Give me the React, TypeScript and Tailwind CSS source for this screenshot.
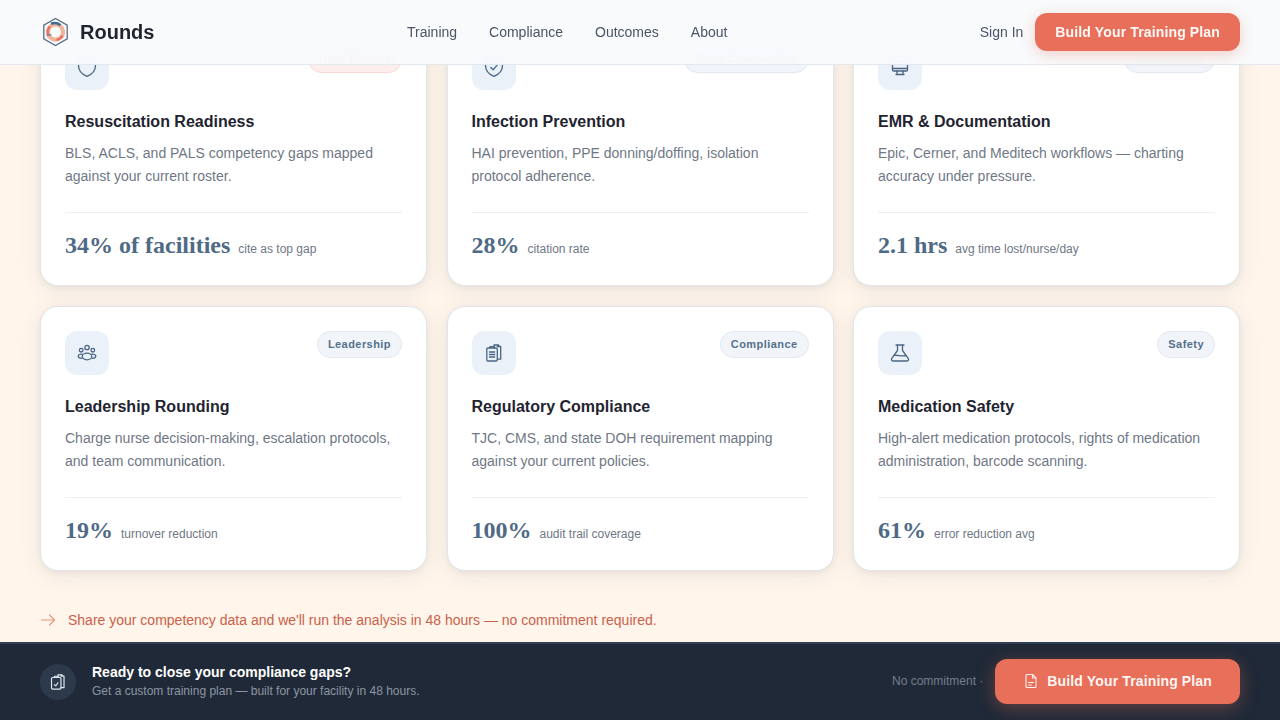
import type { ReactNode } from "react"

const slate = "#4a6583"

function LogoMark() {
  return (
    <svg width="30" height="30" viewBox="0 0 30 30" fill="none" className="shrink-0">
      <path d="M15.500 1.500 27.200 8.200v13.600L15.500 28.500 3.800 21.800V8.200Z" stroke="#56708a" strokeWidth="1.300" fill="#f8fafc" />
      <circle cx="15.500" cy="15" r="7.600" stroke="#f2b49c" strokeWidth="4.200" />
      <path d="M8.200 17.500A7.800 7.800 0 0 1 10 9.500M22.500 18.500a7.800 7.800 0 0 1-6 4.300" stroke="#e8705a" strokeWidth="2.200" />
      <path d="M11 6.800a9.500 9.500 0 0 1 9.500 1.400" stroke="#3f6b93" strokeWidth="2.600" />
      <path d="M6.800 18h4.500" stroke="#54657a" strokeWidth="1.100" />
    </svg>
  )
}

function IconBase({ children, size = 20, color = slate, width = 1.300 }: { children: ReactNode; size?: number; color?: string; width?: number }) {
  return (
    <svg width={size} height={size} viewBox="0 0 20 20" fill="none" stroke={color} strokeWidth={width} strokeLinecap="round" strokeLinejoin="round">
      {children}
    </svg>
  )
}

const shieldPath = "M10 18.300C5.200 16.400 1.500 13 1.500 7.500V3.500L10 1l8.500 2.500v4c0 5.500-3.700 8.900-8.500 10.800Z"

function ShieldIcon() {
  return (
    <IconBase>
      <path d={shieldPath} />
    </IconBase>
  )
}

function ShieldCheckIcon() {
  return (
    <IconBase>
      <path d={shieldPath} />
      <path d="m6.800 9.500 2.300 2.300 4.200-5" />
    </IconBase>
  )
}

function MonitorIcon() {
  return (
    <IconBase>
      <rect x="2.500" y="3" width="15" height="10" rx="1" />
      <path d="M2.500 10.500h15M7 13v3.500h6V13M6 16.500h8" />
    </IconBase>
  )
}

function TeamIcon() {
  return (
    <IconBase>
      <circle cx="10" cy="4.500" r="2.200" />
      <circle cx="4.200" cy="7.200" r="1.800" />
      <circle cx="15.800" cy="7.200" r="1.800" />
      <ellipse cx="10" cy="13.500" rx="4.800" ry="3.300" />
      <path d="M5.300 11.200C3 11.200 1.200 12.200 1.200 13.300s1.500 1.900 3.700 2M14.700 11.200c2.300 0 4.100 1 4.100 2.100s-1.500 1.900-3.700 2" />
    </IconBase>
  )
}

function ClipboardsIcon({ color = slate, check = false, size = 20 }: { color?: string; check?: boolean; size?: number }) {
  return (
    <IconBase color={color} size={size}>
      <rect x="2.800" y="5" width="10.500" height="13" rx="1.200" />
      <path d="M6 5V3.600h4.200V5" />
      <path d="M13.300 3.500h3.400v12.700h-3.400M10 3.500V2h4.600v1.500" />
      {check ? <path d="m6 13 1.500 1.300L10 10.800" /> : <path d="M5.500 9h5.200M5.500 11.500h5.200M5.500 14h5.200" />}
    </IconBase>
  )
}

function FlaskIcon() {
  return (
    <IconBase>
      <path d="M7.500 2v5.500L1.800 15.300C.9 16.600 1.800 18 3.300 18h13.400c1.500 0 2.400-1.400 1.500-2.700L12.500 7.500V2M6 2h8" />
      <path d="M4 12.500c3.500-1 7 1.200 12 0" />
    </IconBase>
  )
}

function PlanIcon() {
  return (
    <svg width="16" height="16" viewBox="0 0 16 16" fill="none" stroke="#fff" strokeWidth="1.100" strokeLinecap="round" strokeLinejoin="round" className="opacity-90">
      <path d="M3 2.500c0-.6.400-1 1-1h5.500L13 5v8.500c0 .6-.400 1-1 1H4c-.6 0-1-.4-1-1Z" />
      <path d="M9.500 1.500V5H13M5.500 9.500h5M5.500 12h3" />
    </svg>
  )
}

type Item = {
  icon: ReactNode
  tag: string
  tagClass: string
  title: string
  lines: string[]
  stat: string
  note: string
}

const neutralTag = "border-[#e2e8f0] bg-[#f1f5f9] text-[#56708c]"

const items: Item[] = [
  {
    icon: <ShieldIcon />,
    tag: "High Priority",
    tagClass: "border-[#fbd9d3] bg-[#fdeeeb] text-[#c8553d]",
    title: "Resuscitation Readiness",
    lines: ["BLS, ACLS, and PALS competency gaps mapped", "against your current roster."],
    stat: "34% of facilities",
    note: "cite as top gap",
  },
  {
    icon: <ShieldCheckIcon />,
    tag: "Joint Commission",
    tagClass: neutralTag,
    title: "Infection Prevention",
    lines: ["HAI prevention, PPE donning/doffing, isolation", "protocol adherence."],
    stat: "28%",
    note: "citation rate",
  },
  {
    icon: <MonitorIcon />,
    tag: "Productivity",
    tagClass: neutralTag,
    title: "EMR & Documentation",
    lines: ["Epic, Cerner, and Meditech workflows — charting", "accuracy under pressure."],
    stat: "2.1 hrs",
    note: "avg time lost/nurse/day",
  },
  {
    icon: <TeamIcon />,
    tag: "Leadership",
    tagClass: neutralTag,
    title: "Leadership Rounding",
    lines: ["Charge nurse decision-making, escalation protocols,", "and team communication."],
    stat: "19%",
    note: "turnover reduction",
  },
  {
    icon: <ClipboardsIcon />,
    tag: "Compliance",
    tagClass: neutralTag,
    title: "Regulatory Compliance",
    lines: ["TJC, CMS, and state DOH requirement mapping", "against your current policies."],
    stat: "100%",
    note: "audit trail coverage",
  },
  {
    icon: <FlaskIcon />,
    tag: "Safety",
    tagClass: neutralTag,
    title: "Medication Safety",
    lines: ["High-alert medication protocols, rights of medication", "administration, barcode scanning."],
    stat: "61%",
    note: "error reduction avg",
  },
]

function Card({ item }: { item: Item }) {
  return (
    <div className="flex h-[265px] flex-col rounded-[18px] border border-[#e2e5ea] bg-white px-6 pt-6 shadow-[0_2px_6px_rgba(30,42,58,0.06),0_4px_24px_rgba(30,42,58,0.07)]">
      <div className="flex items-start justify-between">
        <div className="flex size-11 items-center justify-center rounded-xl bg-[#ebf1f8]">{item.icon}</div>
        <span className={`rounded-full border px-2.5 py-[5px] text-[11px] leading-[15px] font-bold tracking-[0.04em] ${item.tagClass}`}>
          {item.tag}
        </span>
      </div>
      <h3 className="mt-[21px] text-base leading-[22px] font-bold text-[#1f2430]">{item.title}</h3>
      <p className="mt-[9px] text-sm leading-[23px] text-[#6f7785]">
        {item.lines[0]}
        <br />
        {item.lines[1]}
      </p>
      <div className="mt-[24px] flex items-baseline gap-2 border-t border-[#eceff3] pt-[17px]">
        <span className="font-['Liberation_Serif',serif] text-2xl leading-[30px] font-bold text-[#4f6a85]">{item.stat}</span>
        <span className="text-xs text-[#6f7785]">{item.note}</span>
      </div>
    </div>
  )
}

export default function App() {
  return (
    <div className="relative flex h-screen flex-col overflow-hidden bg-[#fff5eb] font-['Liberation_Sans',Arial,sans-serif]">
      <header className="absolute inset-x-0 top-0 z-10 flex h-[65px] items-center justify-between border-b border-[#e2e8f0] bg-[#f8fafc]/95 px-10 backdrop-blur-md">
        <div className="flex items-center gap-[10px]">
          <LogoMark />
          <span className="text-xl font-bold text-[#1f2430]">Rounds</span>
        </div>
        <nav className="absolute left-[407px] flex gap-8 text-sm text-[#4a5568]">
          <a>Training</a>
          <a>Compliance</a>
          <a>Outcomes</a>
          <a>About</a>
        </nav>
        <div className="flex items-center gap-3">
          <a className="text-sm text-[#4a5568]">Sign In</a>
          <button className="h-[38px] rounded-xl bg-[#e8705a] px-5 text-sm font-bold tracking-[0.01em] text-white/95 shadow-[0_4px_14px_rgba(232,112,90,0.3)]">
            Build Your Training Plan
          </button>
        </div>
      </header>

      <main className="flex min-h-0 flex-1 flex-col px-10 pt-[21px]">
        <div className="grid grid-cols-3 gap-x-[19.5px] gap-y-5">
          {items.map((item) => (
            <Card key={item.title} item={item} />
          ))}
        </div>
        <div className="mt-[39px] flex items-center gap-3 text-sm leading-5 text-[#c9614a]">
          <svg width="16" height="16" viewBox="0 0 16 16" fill="none" stroke="#e8957f" strokeWidth="1.100" strokeLinecap="round" strokeLinejoin="round">
            <path d="M1.500 8h13M9.500 3l5 5-5 5" />
          </svg>
          <span>Share your competency data and we'll run the analysis in 48 hours — no commitment required.</span>
        </div>
      </main>

      <footer className="flex h-[78px] shrink-0 items-center justify-between border-t-2 border-[#2d3f55] bg-[#1f2937] px-10">
        <div className="flex items-center gap-4">
          <div className="flex size-9 items-center justify-center rounded-full bg-[#2d3a4b]">
            <ClipboardsIcon color="#e2e8f0" check size={18} />
          </div>
          <div className="-mt-[2px]">
            <p className="text-sm leading-[20px] font-bold text-white">Ready to close your compliance gaps?</p>
            <p className="text-xs leading-[18px] text-[#8d96a3]">Get a custom training plan — built for your facility in 48 hours.</p>
          </div>
        </div>
        <div className="mb-[2px] flex items-center gap-3">
          <span className="text-xs text-[#737f8e]">No commitment ·</span>
          <button className="flex h-[45px] items-center gap-2 rounded-xl bg-[#e8705a] px-7 text-sm font-bold tracking-[0.01em] text-white/95 shadow-[0_4px_18px_rgba(232,112,90,0.35)]">
            <PlanIcon />
            Build Your Training Plan
          </button>
        </div>
      </footer>
    </div>
  )
}
